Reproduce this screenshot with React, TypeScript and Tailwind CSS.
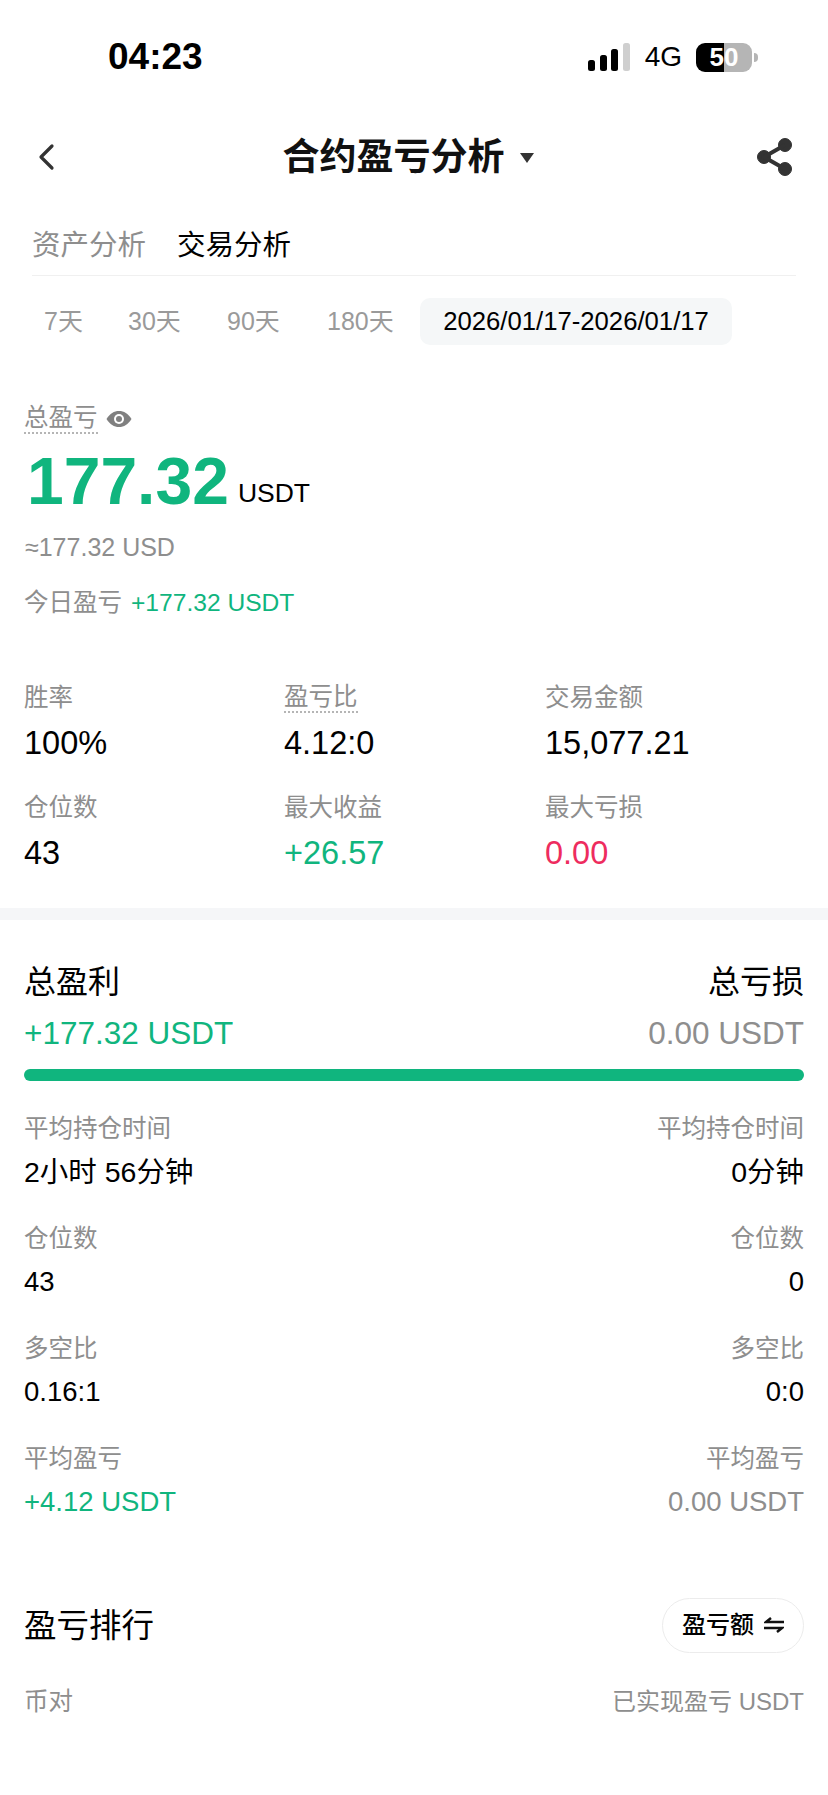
const font = { fontFamily: '"Liberation Sans", "Noto Sans CJK SC", sans-serif' };

function Dotted({ children }: { children: React.ReactNode }) {
  return (
    <span className="border-b-2 border-dotted border-[#b5b5b5] leading-[28px] inline-block">{children}</span>
  );
}

function Stat({ label, value, color, dotted }: { label: string; value: string; color?: string; dotted?: boolean }) {
  return (
    <div className="h-[110px]">
      <div className="h-[34px] flex items-center text-[24.5px] text-[#8e8e8e]">
        {dotted ? <Dotted>{label}</Dotted> : label}
      </div>
      <div className={`mt-[10px] text-[32.5px] leading-[36px] ${color ?? "text-black"}`}>{value}</div>
    </div>
  );
}

function Row({ label, left, right, green, cjk }: { label: string; left: string; right: string; green?: boolean; cjk?: boolean }) {
  const size = cjk ? "text-[28.5px]" : "text-[27.5px]";
  return (
    <div className="h-[110px] flex justify-between">
      <div>
        <div className="h-[34px] flex items-center text-[24.5px] text-[#8e8e8e]">{label}</div>
        <div className={`mt-[9px] ${size} leading-[34px] ${green ? "text-[#10b57e]" : "text-black"}`}>{left}</div>
      </div>
      <div className="text-right">
        <div className="h-[34px] flex items-center justify-end text-[24.5px] text-[#8e8e8e]">{label}</div>
        <div className={`mt-[9px] ${size} leading-[34px] ${green ? "text-[#8e8e8e]" : "text-black"}`}>{right}</div>
      </div>
    </div>
  );
}

function StatusBar() {
  return (
    <div className="h-[114px] pl-[108px] pr-[70px] flex items-center justify-between">
      <span className="text-[37px] font-bold text-black">04:23</span>
      <div className="flex items-center">
        <svg width="44" height="28" viewBox="0 0 44 28">
          <rect x="0" y="17" width="7" height="11" rx="2.5" fill="#000" />
          <rect x="12" y="12" width="7" height="16" rx="2.5" fill="#000" />
          <rect x="23" y="6" width="7" height="22" rx="2.5" fill="#000" />
          <rect x="35" y="0" width="7" height="28" rx="2.5" fill="#cfcfcf" />
        </svg>
        <span className="ml-[13px] text-[28px] text-black">4G</span>
        <div className="ml-[14px] w-[56px] h-[29px] rounded-[9px] overflow-hidden flex relative">
          <div className="w-[28px] bg-black" />
          <div className="flex-1 bg-[#b5b5b5]" />
          <span className="absolute inset-0 flex items-center justify-center text-[26px] font-bold text-white">50</span>
        </div>
        <div className="ml-[2px] w-[4px] h-[9px] rounded-r-full bg-[#b5b5b5]" />
      </div>
    </div>
  );
}

export default function App() {
  return (
    <main className="w-[828px] h-[1795px] bg-white overflow-hidden" style={font}>
      <StatusBar />

      {/* Nav */}
      <div className="h-[86px] pl-[36px] pr-[35px] flex items-center justify-between">
        <svg width="20" height="28" viewBox="0 0 20 28" fill="none" stroke="#333" strokeWidth="3.2" strokeLinecap="round" strokeLinejoin="round">
          <path d="M16 3 L5 14 L16 25" />
        </svg>
        <div className="flex items-center ml-[3px] pt-[2px]">
          <span className="text-[37px] font-bold text-[#111]">合约盈亏分析</span>
          <svg className="ml-[15px]" width="14" height="10" viewBox="0 0 14 10"><path d="M0 0H14L7 10Z" fill="#333" /></svg>
        </div>
        <svg width="36" height="38" viewBox="0 0 36 38" fill="#333" stroke="#333">
          <circle cx="28" cy="7" r="6.5" />
          <circle cx="7" cy="19" r="6.5" />
          <circle cx="28" cy="31" r="6.5" />
          <path d="M28 7 L7 19 L28 31" fill="none" strokeWidth="4" />
        </svg>
      </div>

      {/* Tabs */}
      <div className="mx-[32px] mt-[6px] h-[70px] pt-[9px] border-b border-[#f0f0f0] flex items-center gap-[31px] text-[28.5px]">
        <span className="text-[#8e8e8e]">资产分析</span>
        <span className="text-black">交易分析</span>
      </div>

      {/* Date range pills */}
      <div className="mt-[22px] ml-[44px] h-[47px] flex items-center text-[25px] text-[#9a9a9a]">
        <span className="w-[84px]">7天</span>
        <span className="w-[99px]">30天</span>
        <span className="w-[100px]">90天</span>
        <span className="w-[93px]">180天</span>
        <span className="w-[312px] h-[47px] rounded-[10px] bg-[#f5f7f8] flex items-center justify-center text-[25.7px] text-black">
          2026/01/17-2026/01/17
        </span>
      </div>

      {/* Total */}
      <div className="px-[24px] mt-[57px]">
        <div className="h-[34px] flex items-center text-[24.5px] text-[#8e8e8e]">
          <Dotted>总盈亏</Dotted>
          <svg className="ml-[8px]" width="26" height="18" viewBox="0 0 26 18">
            <path d="M0.5 9C4 3.5 8 1 13 1s9 2.5 12.5 8C22 14.500 18 17 13 17S4 14.500 0.5 9Z" fill="#808080" />
            <circle cx="13" cy="9" r="5" fill="#fff" />
            <circle cx="13" cy="9" r="3" fill="#808080" />
          </svg>
        </div>
        <div className="mt-[9px] h-[72px] pl-[3px] flex items-end">
          <span className="text-[66px] leading-[72px] font-bold text-[#10b57e]">177.32</span>
          <span className="ml-[9px] mb-[8px] text-[26.5px] leading-[32px] text-black">USDT</span>
        </div>
        <div className="mt-[14px] h-[34px] pl-[1px] flex items-center text-[25px] text-[#8e8e8e]">≈177.32 USD</div>
        <div className="mt-[21px] h-[34px] flex items-center text-[24.5px] text-[#8e8e8e]">
          今日盈亏
          <span className="ml-[9px] text-[24.6px] text-[#10b57e]">+177.32 USDT</span>
        </div>
      </div>

      {/* Stats */}
      <div className="px-[24px] mt-[61px] grid grid-cols-[260px_261px_1fr]">
        <Stat label="胜率" value="100%" />
        <Stat label="盈亏比" value="4.12:0" dotted />
        <Stat label="交易金额" value="15,077.21" />
        <Stat label="仓位数" value="43" />
        <Stat label="最大收益" value="+26.57" color="text-[#10b57e]" />
        <Stat label="最大亏损" value="0.00" color="text-[#ee2c5e]" />
      </div>

      <div className="h-[12px] mt-[7px] bg-[#f5f6f8]" />

      {/* Profit and loss */}
      <div className="px-[24px]">
        <div className="mt-[41px] flex justify-between text-[32px] leading-[42px] text-black">
          <span>总盈利</span>
          <span>总亏损</span>
        </div>
        <div className="mt-[11px] flex justify-between text-[31.5px] leading-[38px]">
          <span className="text-[#10b57e]">+177.32 USDT</span>
          <span className="text-[#8e8e8e]">0.00 USDT</span>
        </div>
        <div className="mt-[17px] h-[12px] rounded-full bg-[#10b57e]" />
        <div className="mt-[31px]">
          <Row label="平均持仓时间" left="2小时 56分钟" right="0分钟" cjk />
          <Row label="仓位数" left="43" right="0" />
          <Row label="多空比" left="0.16:1" right="0:0" />
          <Row label="平均盈亏" left="+4.12 USDT" right="0.00 USDT" green />
        </div>

        {/* Ranking */}
        <div className="mt-[45px] h-[56px] flex items-center justify-between">
          <span className="text-[32.5px] text-black pt-[3px]">盈亏排行</span>
          <div className="w-[142px] h-[55px] rounded-full border border-[#ececec] flex items-center justify-center gap-[10px]">
            <span className="text-[24px] font-medium text-black">盈亏额</span>
            <svg width="20" height="16" viewBox="0 0 20 16" fill="none" stroke="#111" strokeWidth="2.500">
              <path d="M20 5H2L7 1" />
              <path d="M0 11H18L13 15" />
            </svg>
          </div>
        </div>
        <div className="mt-[32px] flex justify-between text-[24.5px] leading-[34px] text-[#8e8e8e]">
          <span>币对</span>
          <span className="text-[24px]">已实现盈亏 USDT</span>
        </div>
      </div>
    </main>
  );
}
